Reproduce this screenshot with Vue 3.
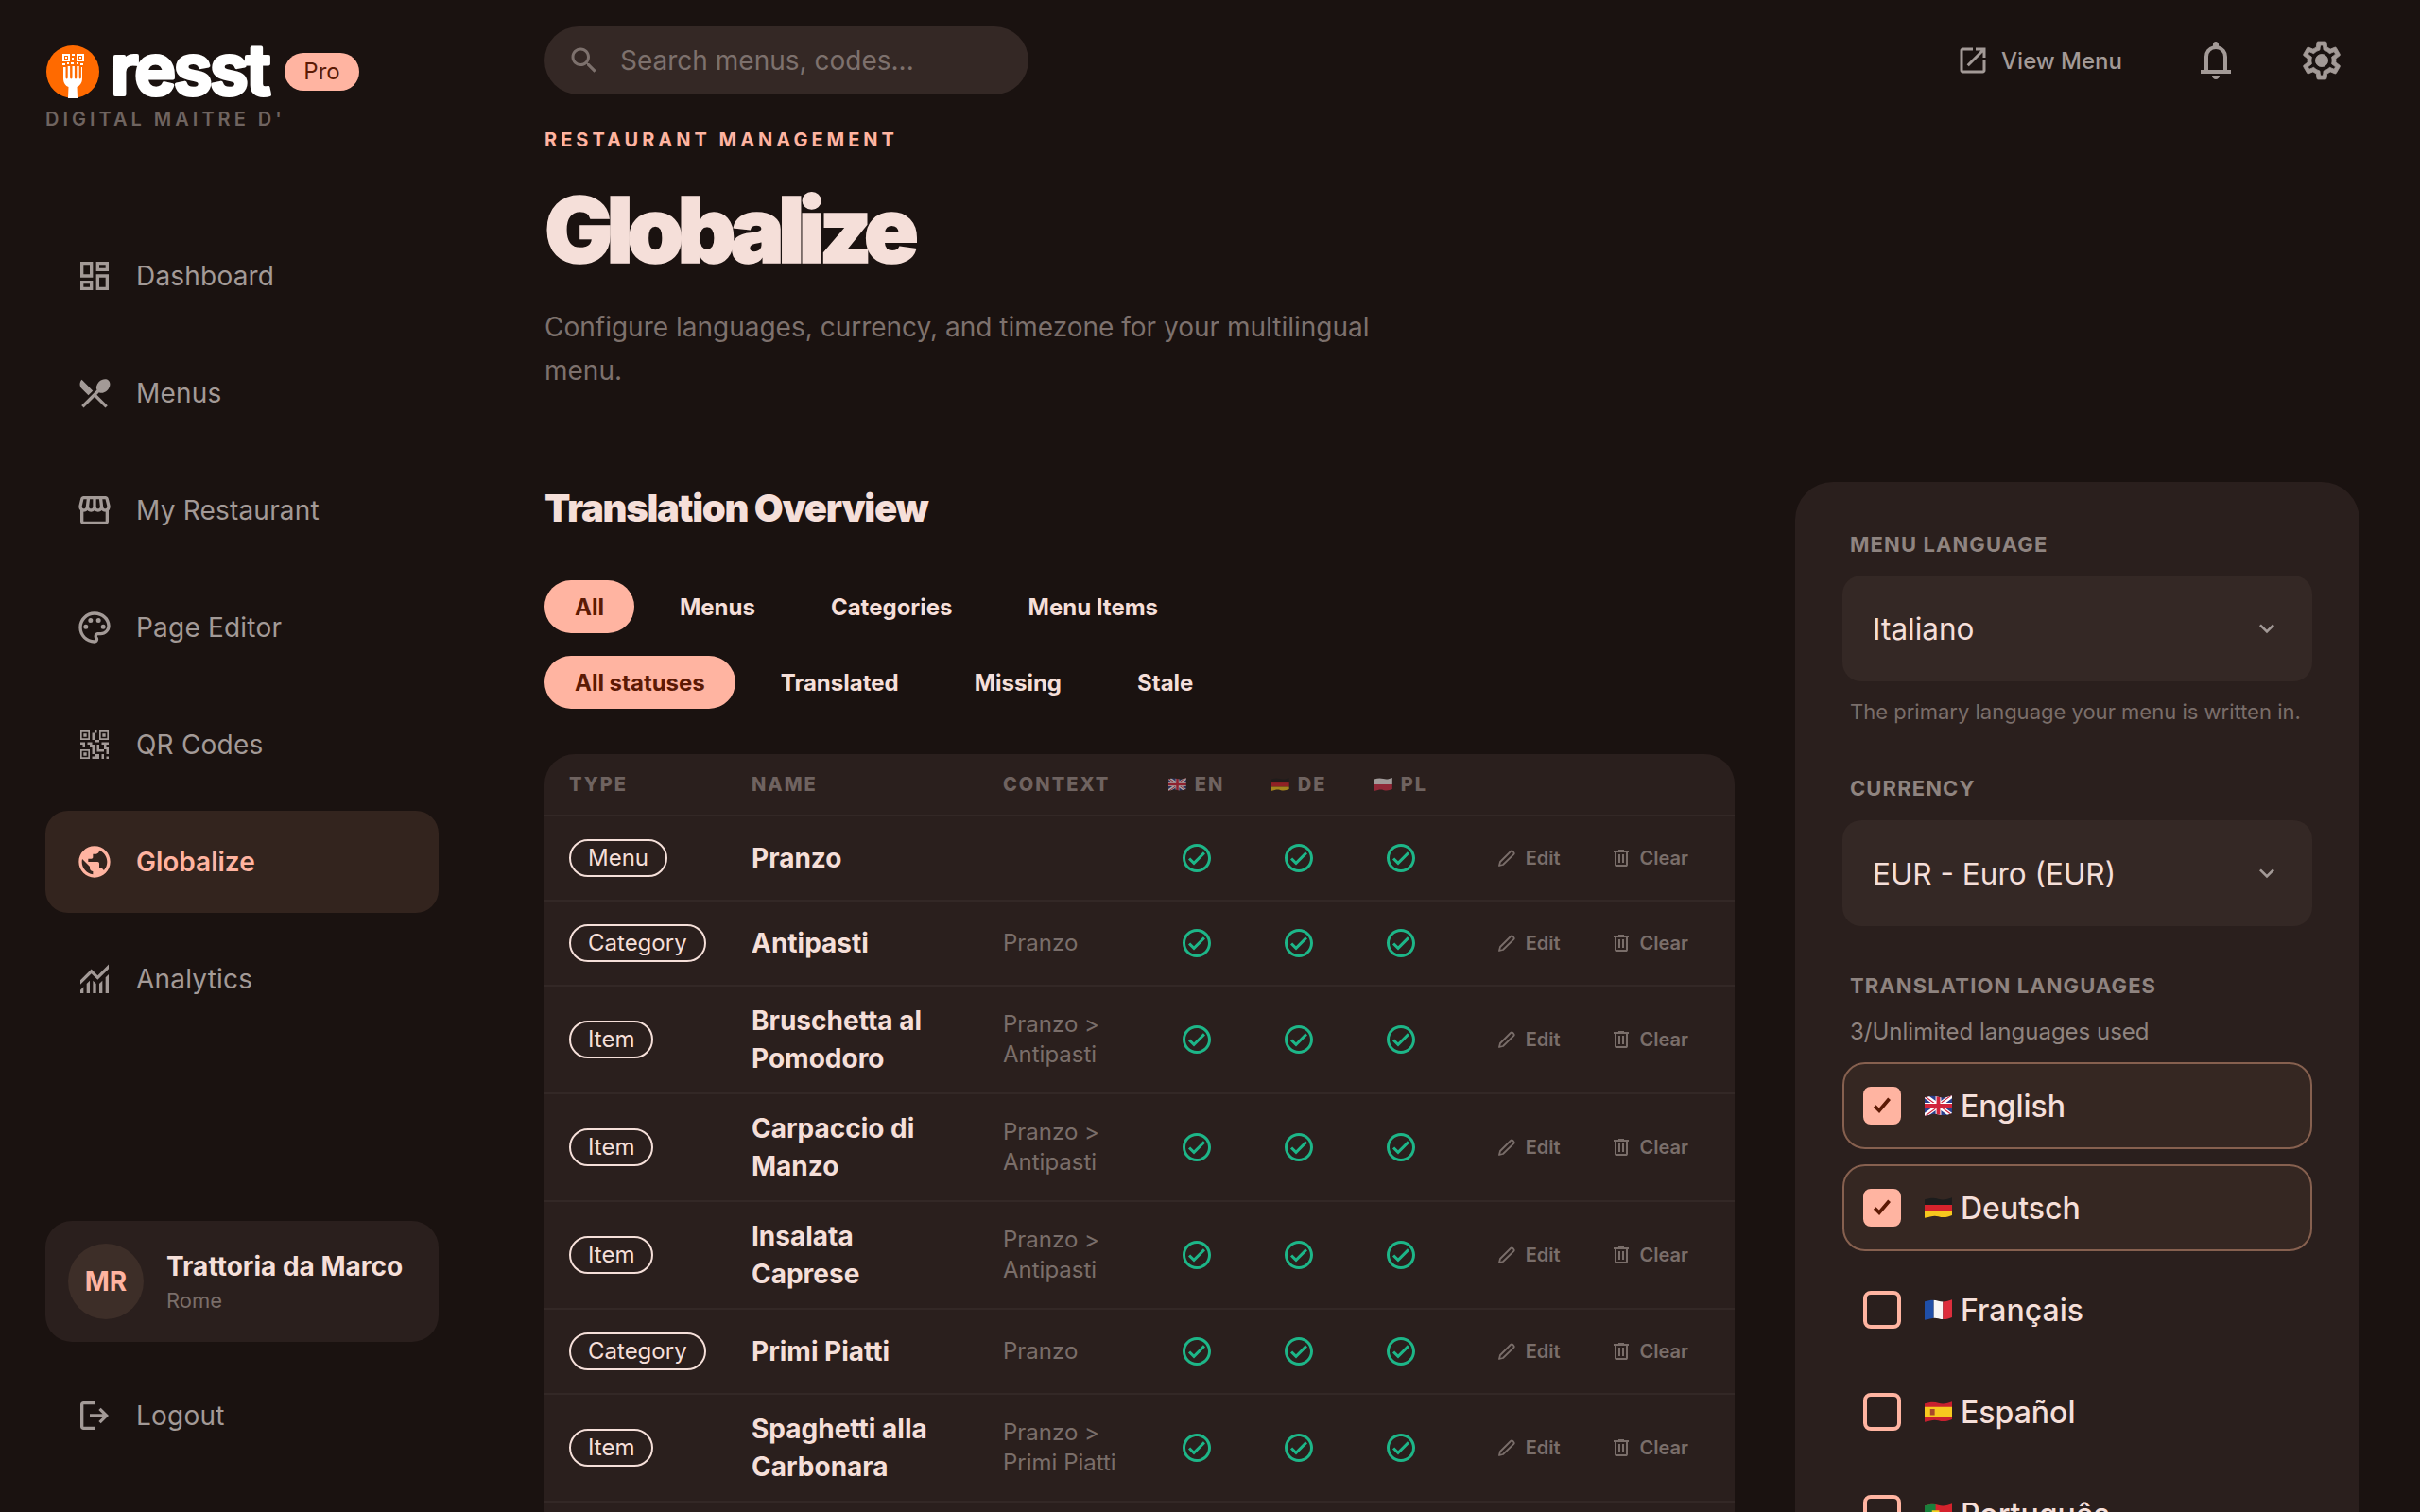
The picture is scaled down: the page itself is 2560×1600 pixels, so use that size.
<script setup>
const navItems = [
  { label: "Dashboard", icon: "M19 5v2h-4V5h4M9 5v6H5V5h4m10 8v6h-4v-6h4M9 17v2H5v-2h4M21 3h-8v6h8V3zM11 3H3v10h8V3zm10 8h-8v10h8V11zm-10 4H3v6h8v-6z" },
  { label: "Menus", icon: "M8.1 13.34l2.83-2.83L3.91 3.5c-1.56 1.56-1.56 4.09 0 5.66l4.19 4.18zm6.78-1.81c1.53.71 3.68.21 5.27-1.38 1.91-1.91 2.28-4.65.81-6.12-1.46-1.46-4.2-1.1-6.12.81-1.59 1.59-2.09 3.74-1.38 5.27L3.7 19.87l1.41 1.41L12 14.41l6.88 6.88 1.41-1.41L13.41 13l1.47-1.47z" },
  { label: "My Restaurant", icon: "M21.9 8.89l-1.05-4.37c-.22-.9-1-1.52-1.91-1.52H5.05c-.9 0-1.69.63-1.9 1.52L2.1 8.89c-.24 1.02-.02 2.06.62 2.88.08.11.19.19.28.29V19c0 1.1.9 2 2 2h14c1.1 0 2-.9 2-2v-6.94c.09-.09.2-.18.28-.28.64-.82.87-1.87.62-2.89zm-2.99-3.9l1.05 4.37c.1.42.01.84-.25 1.17-.14.18-.44.47-.94.47-.61 0-1.14-.49-1.21-1.14L16.98 5l1.93-.01zM13 5h1.96l.54 4.52c.05.39-.07.78-.33 1.07-.22.26-.54.41-.95.41-.67 0-1.22-.59-1.22-1.31V5zM8.49 9.52L9.04 5H11v4.69c0 .72-.55 1.31-1.29 1.31-.34 0-.65-.15-.89-.41-.25-.29-.37-.68-.33-1.07zm-4.45-.16L5.05 5h1.97l-.58 4.86c-.08.65-.6 1.14-1.21 1.14-.49 0-.8-.29-.93-.47-.27-.32-.36-.75-.26-1.17zM5 19v-6.03c.08.01.15.03.23.03.87 0 1.66-.36 2.24-.95.6.6 1.4.95 2.31.95.87 0 1.65-.36 2.23-.93.59.57 1.39.93 2.29.93.84 0 1.64-.35 2.24-.95.58.59 1.37.95 2.24.95.08 0 .15-.02.23-.03V19H5z" },
  { label: "Page Editor", icon: "M12 22C6.49 22 2 17.51 2 12S6.49 2 12 2s10 4.04 10 9c0 3.31-2.69 6-6 6h-1.77c-.28 0-.5.22-.5.5 0 .12.05.23.13.33.41.47.64 1.06.64 1.67 0 1.38-1.12 2.5-2.5 2.5zm0-18c-4.41 0-8 3.59-8 8s3.59 8 8 8c.28 0 .5-.22.5-.5 0-.16-.08-.28-.14-.35-.41-.46-.63-1.05-.63-1.65 0-1.38 1.12-2.5 2.5-2.5H16c2.21 0 4-1.79 4-4 0-3.86-3.59-7-8-7zM6.5 10a1.5 1.5 0 1 0 0 3 1.5 1.5 0 0 0 0-3zm3-4a1.5 1.5 0 1 0 0 3 1.5 1.5 0 0 0 0-3zm5 0a1.5 1.5 0 1 0 0 3 1.5 1.5 0 0 0 0-3zm3 4a1.5 1.5 0 1 0 0 3 1.5 1.5 0 0 0 0-3z" },
  { label: "QR Codes", icon: "M3 3h6v6H3zm1 1v4h4V4zm1 1v2h2V5zM15 3h6v6h-6zm1 1v4h4V4zm1 1v2h2V5zM3 15h6v6H3zm1 1v4h4v-4zm1 1v2h2v-2zM12 3h1.5v1.5H12zM10.5 4.5H12V9h-1.5zM3 10.5h3V12H3zM7.5 10.5h3V12h-3zM12 9h3v1.5h-3zM16.5 10.5H21V12h-4.5zM4.5 12H6v1.5H4.5zM9 12h3v1.5H9zM13.5 12H15v3h-1.5zM18 12h1.5v3H18zM10.5 13.5H12V18h-1.5zM15 15h3v1.5h-3zM19.5 13.5H21V18h-1.5zM12 18h3v3h-3zM16.5 18H18v3h-1.5zM19.5 19.5H21V21h-1.5zM10.5 19.5H12V21h-1.5zM13.5 15H15v1.5h-1.5z" },
  { label: "Globalize", active: true, icon: "M12 2C6.48 2 2 6.48 2 12s4.48 10 10 10 10-4.48 10-10S17.52 2 12 2zm-1 17.93c-3.95-.49-7-3.85-7-7.93 0-.62.08-1.21.21-1.79L9 15v1c0 1.1.9 2 2 2v1.93zm6.9-2.54c-.26-.81-1-1.39-1.9-1.39h-1v-3c0-.55-.45-1-1-1H8v-2h2c.55 0 1-.45 1-1V7h2c1.1 0 2-.9 2-2v-.41c2.93 1.19 5 4.06 5 7.41 0 2.08-.8 3.97-2.1 5.39z" },
  { label: "Analytics", icon: "M3 21v-2l2-2v4H3zm4 0v-6l2-2v8H7zm4 0v-8l2 2v6h-2zm4 0v-6l2-2v8h-2zm4 0V11l2-2v12h-2zM3 15.5v-2.8l7-7 4 4 7-7v2.8l-7 7-4-4-7 7z" },
];

const iconCheck = "M12 2C6.48 2 2 6.48 2 12s4.48 10 10 10 10-4.48 10-10S17.52 2 12 2zm0 18c-4.41 0-8-3.59-8-8s3.59-8 8-8 8 3.59 8 8-3.59 8-8 8zm4.59-12.42L10 14.17l-2.59-2.58L6 13l4 4 8-8z";
const iconEdit = "M4 20l1-4L16 5q1.2-1.2 2.4 0l.8.8q1.2 1.2 0 2.4L8 19z";
const iconTrash = "M7 21q-.825 0-1.413-.588T5 19V6H4V4h5V3h6v1h5v2h-1v13q0 .825-.588 1.413T17 21H7zM17 6H7v13h10V6zM9 17h2V8H9v9zm4 0h2V8h-2v9z";
const iconChevron = "M16.59 8.59L12 13.17 7.41 8.59 6 10l6 6 6-6z";

const typeFilters = ["All", "Menus", "Categories", "Menu Items"];
const statusFilters = ["All statuses", "Translated", "Missing", "Stale"];

const rows = [
  { type: "Menu", name: "Pranzo", context: "" },
  { type: "Category", name: "Antipasti", context: "Pranzo" },
  { type: "Item", name: "Bruschetta al Pomodoro", context: "Pranzo > Antipasti" },
  { type: "Item", name: "Carpaccio di Manzo", context: "Pranzo > Antipasti" },
  { type: "Item", name: "Insalata Caprese", context: "Pranzo > Antipasti" },
  { type: "Category", name: "Primi Piatti", context: "Pranzo" },
  { type: "Item", name: "Spaghetti alla Carbonara", context: "Pranzo > Primi Piatti" },
];

// flags are drawn on a 30x22 box, the wave comes from the clip path in the template
const flags = {
  gb: [
    { d: "M0 0h30v22H0z", fill: "#2b3f8c" },
    { d: "M0 0h4l26 19v3h-4L0 3zM30 0v3L4 22H0v-3L26 0z", fill: "#fff" },
    { d: "M0 0l13 9.5h-2L0 1.5zM30 22L17 12.5h2l11 8zM30 0L17 9.5h-2L28 0zM0 22l13-9.5h2L2 22z", fill: "#d0243c" },
    { d: "M12 0h6v8h12v6H18v8h-6v-8H0V8h12z", fill: "#fff" },
    { d: "M13 0h4v9h13v4H17v9h-4v-9H0V9h13z", fill: "#d0243c" },
  ],
  de: [
    { d: "M0 0h30v8H0z", fill: "#1c1c1c" },
    { d: "M0 8h30v7H0z", fill: "#d5232c" },
    { d: "M0 15h30v7H0z", fill: "#f6c81e" },
  ],
  pl: [
    { d: "M0 0h30v11H0z", fill: "#f2eeee" },
    { d: "M0 11h30v11H0z", fill: "#d6304a" },
  ],
  fr: [
    { d: "M0 0h10v22H0z", fill: "#1f4fa8" },
    { d: "M10 0h10v22H10z", fill: "#f6f6f6" },
    { d: "M20 0h10v22H20z", fill: "#dd2e3c" },
  ],
  es: [
    { d: "M0 0h30v22H0z", fill: "#c8202f" },
    { d: "M0 5.5h30v11H0z", fill: "#f7c91f" },
    { d: "M6 8h5v6.5H6z", fill: "#a8482a" },
  ],
  pt: [
    { d: "M0 0h30v22H0z", fill: "#d5232c" },
    { d: "M0 0h12v22H0z", fill: "#18803c" },
    { d: "M8 7h8v8H8z", fill: "#f5d020" },
  ],
};

const columns = [
  { code: "EN", flag: "gb" },
  { code: "DE", flag: "de" },
  { code: "PL", flag: "pl" },
];

const languages = [
  { name: "English", flag: "gb", on: true },
  { name: "Deutsch", flag: "de", on: true },
  { name: "Français", flag: "fr", on: false },
  { name: "Español", flag: "es", on: false },
  { name: "Português", flag: "pt", on: false },
];
</script>

<template>
  <svg class="defs" width="0" height="0" aria-hidden="true">
    <defs>
      <clipPath id="flag-wave" clipPathUnits="objectBoundingBox">
        <path d="M0,.1 C.2,.02 .35,.0 .5,.08 C.7,.16 .85,.08 1,0 L1,.86 C.85,.94 .7,1 .5,.92 C.35,.86 .2,.92 0,1 Z" />
      </clipPath>
    </defs>
  </svg>

  <div class="app">
    <aside class="sidebar">
      <div class="brand">
        <div class="brand-row">
          <svg class="logo-mark" viewBox="0 0 56 56">
            <circle cx="28" cy="28" r="28" fill="#ff6a00" />
            <g fill="#fff">
              <path d="M17 9h8v8h-8zm2 2v4h4v-4zM32 9h8v8h-8zm2 2v4h4v-4zM20 12h2v2h-2zM35 12h2v2h-2zM27 9h3v2h-3zM27 13h2v3h-2zM17 19h3v2h-3zM22 18h2v2h-2zM26 18h3v2h-3zM32 18h2v2h-2zM36 19h3v2h-3z" />
              <path d="M18 23h2.5v11c0 .8.6 1.4 1.2 1.4s1-.6 1-1.4V22h2.4v12c0 .8.5 1.4 1.2 1.4s1.2-.6 1.2-1.4V22h2.4v12c0 .8.5 1.4 1.2 1.4s1.2-.6 1.2-1.4V22h2.4v12c0 .8.4 1.4 1 1.4s1.2-.6 1.2-1.4V23H38v12c0 5-3 8-5.5 9l.5 12h-10l.5-12C20.6 43 18 40 18 35z" />
            </g>
          </svg>
          <svg class="wordmark" viewBox="0 0 174 70">
            <text x="2" y="58">resst</text>
          </svg>
          <span class="pro">Pro</span>
        </div>
        <div class="tagline">DIGITAL MAITRE D'</div>
      </div>

      <nav class="nav">
        <a v-for="item in navItems" :key="item.label" class="nav-item" :class="{ active: item.active }">
          <svg class="nav-icon" viewBox="0 0 24 24"><path :d="item.icon" fill-rule="evenodd" /></svg>
          <span>{{ item.label }}</span>
        </a>
      </nav>

      <div class="side-foot">
        <div class="user-card">
          <div class="avatar">MR</div>
          <div>
            <div class="user-name">Trattoria da Marco</div>
            <div class="user-city">Rome</div>
          </div>
        </div>
        <a class="nav-item">
          <svg class="nav-icon" viewBox="0 0 24 24"><path d="M5 21q-.825 0-1.413-.588T3 19V5q0-.825.588-1.413T5 3h7v2H5v14h7v2H5zm11-4-1.375-1.45 2.55-2.55H9v-2h8.175l-2.55-2.55L16 7l5 5-5 5z" /></svg>
          <span>Logout</span>
        </a>
      </div>
    </aside>

    <main class="main">
      <header class="topbar">
        <div class="search">
          <svg class="search-icon" viewBox="0 0 24 24"><path d="M15.5 14h-.79l-.28-.27C15.41 12.59 16 11.11 16 9.5 16 5.91 13.09 3 9.5 3S3 5.91 3 9.5 5.91 16 9.5 16c1.61 0 3.09-.59 4.23-1.57l.27.28v.79l5 4.99L20.49 19l-4.99-5zm-6 0C7.01 14 5 11.99 5 9.5S7.01 5 9.5 5 14 7.01 14 9.5 11.99 14 9.5 14z" /></svg>
          <span>Search menus, codes...</span>
        </div>
        <div class="top-actions">
          <a class="view-menu">
            <svg viewBox="0 0 24 24"><path d="M19 19H5V5h7V3H5c-1.11 0-2 .9-2 2v14c0 1.1.89 2 2 2h14c1.1 0 2-.9 2-2v-7h-2v7zM14 3v2h3.59l-9.83 9.83 1.41 1.41L19 6.41V10h2V3h-7z" /></svg>
            <span>View Menu</span>
          </a>
          <svg class="top-icon" viewBox="0 0 24 24"><path d="M4 19v-2h2v-7q0-2.075 1.25-3.688T10.5 4.2v-.7q0-.625.438-1.063T12 2q.625 0 1.063.438T13.5 3.5v.7q1.875.475 3.188 2.088T18 10v7h2v2H4zm8 3q-.825 0-1.413-.588T10 20h4q0 .825-.588 1.413T12 22zm-4-5h8v-7q0-1.65-1.175-2.825T12 6q-1.65 0-2.825 1.175T8 10v7z" /></svg>
          <svg class="top-icon gear" viewBox="0 0 24 24">
            <path d="M19.43 12.98c.04-.32.07-.64.07-.98 0-.34-.03-.66-.07-.98l2.11-1.65c.19-.15.24-.42.12-.64l-2-3.46c-.09-.16-.26-.25-.44-.25-.06 0-.12.01-.17.03l-2.49 1c-.52-.4-1.08-.73-1.69-.98l-.38-2.65C14.46 2.18 14.25 2 14 2h-4c-.25 0-.46.18-.49.42l-.38 2.65c-.61.25-1.17.59-1.69.98l-2.49-1c-.06-.02-.12-.03-.18-.03-.17 0-.34.09-.43.25l-2 3.46c-.13.22-.07.49.12.64l2.11 1.65c-.04.32-.07.65-.07.98 0 .33.03.66.07.98l-2.11 1.65c-.19.15-.24.42-.12.64l2 3.46c.09.16.26.25.44.25.06 0 .12-.01.17-.03l2.49-1c.52.4 1.08.73 1.69.98l.38 2.65c.03.24.24.42.49.42h4c.25 0 .46-.18.49-.42l.38-2.65c.61-.25 1.17-.59 1.69-.98l2.49 1c.06.02.12.03.18.03.17 0 .34-.09.43-.25l2-3.46c.12-.22.07-.49-.12-.64l-2.11-1.65zm-1.98-1.71c.04.31.05.52.05.73 0 .21-.02.43-.05.73l-.14 1.13.89.7 1.08.84-.7 1.21-1.27-.51-1.04-.42-.9.68c-.43.32-.84.56-1.25.73l-1.06.43-.16 1.13-.2 1.35h-1.4l-.19-1.35-.16-1.13-1.06-.43c-.43-.18-.83-.41-1.23-.71l-.91-.7-1.06.43-1.27.51-.7-1.21 1.08-.84.89-.7-.14-1.13c-.03-.31-.05-.54-.05-.74s.02-.43.05-.73l.14-1.13-.89-.7-1.08-.84.7-1.21 1.27.51 1.04.42.9-.68c.43-.32.84-.56 1.25-.73l1.06-.43.16-1.13.2-1.35h1.39l.19 1.35.16 1.13 1.06.43c.43.18.83.41 1.23.71l.91.7 1.06-.43 1.27-.51.7 1.21-1.07.85-.89.7.14 1.13z" />
            <circle cx="12" cy="12" r="3.3" />
          </svg>
        </div>
      </header>

      <section class="page-head">
        <div class="eyebrow">RESTAURANT MANAGEMENT</div>
        <h1>Globalize</h1>
        <p>Configure languages, currency, and timezone for your multilingual menu.</p>
      </section>

      <div class="columns">
        <section>
          <h2>Translation Overview</h2>
          <div class="chips">
            <button v-for="(f, i) in typeFilters" :key="f" class="chip" :class="{ on: i === 0 }">{{ f }}</button>
          </div>
          <div class="chips second">
            <button v-for="(f, i) in statusFilters" :key="f" class="chip" :class="{ on: i === 0 }">{{ f }}</button>
          </div>

          <div class="table-card">
            <table>
              <colgroup>
                <col style="width: 193px" />
                <col style="width: 266px" />
                <col style="width: 176px" />
                <col style="width: 109px" />
                <col style="width: 108px" />
                <col style="width: 108px" />
                <col />
              </colgroup>
              <thead>
                <tr>
                  <th>TYPE</th>
                  <th>NAME</th>
                  <th>CONTEXT</th>
                  <th v-for="c in columns" :key="c.code" class="lang">
                    <span class="lang-head">
                      <svg class="flag small" viewBox="0 0 30 22"><path v-for="(s, i) in flags[c.flag]" :key="i" :d="s.d" :fill="s.fill" /></svg>
                      {{ c.code }}
                    </span>
                  </th>
                  <th></th>
                </tr>
              </thead>
              <tbody>
                <tr v-for="row in rows" :key="row.name">
                  <td><span class="badge">{{ row.type }}</span></td>
                  <td class="name">{{ row.name }}</td>
                  <td class="context">{{ row.context }}</td>
                  <td v-for="c in columns" :key="c.code" class="lang">
                    <svg class="check" viewBox="0 0 24 24"><path :d="iconCheck" /></svg>
                  </td>
                  <td>
                    <div class="actions">
                      <a class="act">
                        <svg class="pencil" viewBox="0 0 24 24"><path :d="iconEdit" /></svg>
                        Edit
                      </a>
                      <a class="act">
                        <svg viewBox="0 0 24 24"><path :d="iconTrash" /></svg>
                        Clear
                      </a>
                    </div>
                  </td>
                </tr>
              </tbody>
            </table>
          </div>
        </section>

        <aside class="panel">
          <div class="label first">MENU LANGUAGE</div>
          <div class="select">
            <span>Italiano</span>
            <svg viewBox="0 0 24 24"><path :d="iconChevron" /></svg>
          </div>
          <div class="help">The primary language your menu is written in.</div>

          <div class="label spaced">CURRENCY</div>
          <div class="select">
            <span>EUR - Euro (EUR)</span>
            <svg viewBox="0 0 24 24"><path :d="iconChevron" /></svg>
          </div>

          <div class="label langs">TRANSLATION LANGUAGES</div>
          <div class="used">3/Unlimited languages used</div>
          <div class="lang-list">
            <label v-for="l in languages" :key="l.name" class="lang-row" :class="{ on: l.on }">
              <span class="box">
                <svg v-if="l.on" viewBox="0 0 24 24"><path d="M9.3 19.4 3.6 13.7l2.4-2.4 3.1 3.1 8.6-10.2 2.6 2.2z" /></svg>
              </span>
              <svg class="flag" viewBox="0 0 30 22"><path v-for="(s, i) in flags[l.flag]" :key="i" :d="s.d" :fill="s.fill" /></svg>
              <span>{{ l.name }}</span>
            </label>
          </div>
        </aside>
      </div>
    </main>
  </div>
</template>

<style>
html,
body {
  margin: 0;
  background: #1a1210;
}
</style>

<style scoped>
.defs {
  position: absolute;
}
.app {
  display: flex;
  height: 1600px;
  overflow: hidden;
  background: #1a1210;
  color: #f5dfd9;
  font-family: Inter, "Noto Sans", sans-serif;
}

/* sidebar */
.sidebar {
  width: 512px;
  flex: none;
  box-sizing: border-box;
  padding: 48px 48px 48px;
  display: flex;
  flex-direction: column;
}
.brand {
  height: 86px;
  margin-bottom: 104px;
}
.brand-row {
  display: flex;
  align-items: flex-start;
}
.logo-mark {
  width: 56px;
  height: 56px;
  margin-left: 1px;
}
.wordmark {
  width: 174px;
  height: 70px;
  margin: -6px 0 -14px 10px;
  overflow: visible;
}
.wordmark text {
  font-family: Inter, sans-serif;
  font-size: 74px;
  font-weight: 600;
  letter-spacing: -2.4px;
  fill: #fff;
  stroke: #fff;
  stroke-width: 4px;
  stroke-linejoin: round;
}
.pro {
  margin: 8px 0 0 12px;
  width: 79px;
  height: 40px;
  line-height: 40px;
  text-align: center;
  border-radius: 20px;
  background: #ffb4a1;
  color: #5c1a05;
  font-size: 24px;
}
.tagline {
  margin-top: 10px;
  font-size: 20px;
  font-weight: 600;
  line-height: 24px;
  letter-spacing: 4px;
  color: #6f6460;
}
.nav {
  display: flex;
  flex-direction: column;
  gap: 16px;
}
.nav-item {
  display: flex;
  align-items: center;
  gap: 24px;
  height: 108px;
  padding-left: 32px;
  border-radius: 24px;
  font-size: 28px;
  font-weight: 400;
  letter-spacing: 0.2px;
  color: #a39a97;
}
.nav-item.active {
  background: #33241e;
  color: #ffb4a1;
  font-weight: 600;
  letter-spacing: 0;
}
.nav-icon {
  width: 40px;
  height: 40px;
  fill: currentColor;
}
.side-foot {
  margin-top: auto;
  display: flex;
  flex-direction: column;
  gap: 24px;
}
.user-card {
  display: flex;
  align-items: center;
  gap: 24px;
  height: 128px;
  box-sizing: border-box;
  padding-left: 24px;
  border-radius: 28px;
  background: #2a1f1d;
}
.avatar {
  width: 80px;
  height: 80px;
  border-radius: 50%;
  background: #3d2e28;
  color: #ffb4a1;
  font-size: 28px;
  font-weight: 700;
  line-height: 80px;
  text-align: center;
}
.user-name {
  font-size: 28px;
  font-weight: 700;
  line-height: 40px;
}
.user-city {
  font-size: 22px;
  line-height: 32px;
  color: #7a6e6a;
}

/* main */
.main {
  flex: 1;
  min-width: 0;
  padding: 0 64px;
}
.topbar {
  display: flex;
  align-items: center;
  justify-content: space-between;
  height: 128px;
}
.search {
  display: flex;
  align-items: center;
  gap: 20px;
  width: 512px;
  height: 72px;
  box-sizing: border-box;
  padding-left: 24px;
  border-radius: 36px;
  background: #342825;
  font-size: 28px;
  color: #7d716d;
}
.search-icon {
  width: 36px;
  height: 36px;
  fill: #7d716d;
}
.top-actions {
  display: flex;
  align-items: center;
}
.view-menu {
  display: flex;
  align-items: center;
  gap: 12px;
  font-size: 24px;
  font-weight: 500;
  color: #a39a97;
}
.view-menu svg {
  width: 36px;
  height: 36px;
  fill: #a39a97;
}
.top-icon {
  width: 48px;
  height: 48px;
  fill: #a39a97;
  margin-left: 75px;
}
.top-icon.gear {
  margin-left: 64px;
  margin-right: 16px;
  stroke: #a39a97;
  stroke-width: 0.4;
}
.page-head {
  box-sizing: border-box;
  height: 382px;
  padding-top: 5px;
}
.eyebrow {
  font-size: 20px;
  font-weight: 700;
  line-height: 30px;
  letter-spacing: 4px;
  color: #ffb4a1;
}
h1 {
  margin: 20px 0 0;
  font-size: 96px;
  font-weight: 900;
  line-height: 120px;
  letter-spacing: -6.8px;
  -webkit-text-stroke: 1.5px #f5dfd9;
  color: #f5dfd9;
}
.page-head p {
  margin: 20px 0 0;
  max-width: 896px;
  font-size: 28px;
  line-height: 46px;
  color: #7d716d;
}
.columns {
  display: grid;
  grid-template-columns: 1259px 597px;
  gap: 64px;
}
h2 {
  margin: 0 0 48px;
  font-size: 40px;
  font-weight: 900;
  line-height: 56px;
  letter-spacing: -1.3px;
  color: #f5dfd9;
}
.chips {
  display: flex;
  gap: 16px;
}
.chips.second {
  margin-top: 24px;
}
.chip {
  height: 56px;
  padding: 0 32px;
  border: 0;
  border-radius: 28px;
  background: transparent;
  color: #f5dfd9;
  font-family: inherit;
  font-size: 24px;
  font-weight: 700;
}
.chip.on {
  background: #ffb4a1;
  color: #5c1a05;
}

/* table */
.table-card {
  margin-top: 48px;
  padding-bottom: 40px;
  border-radius: 32px;
  background: #2a1f1d;
  overflow: hidden;
}
table {
  width: 100%;
  table-layout: fixed;
  border-collapse: separate;
  border-spacing: 0;
}
th,
td {
  padding: 0 0 0 26px;
  border-bottom: 2px solid #332826;
  text-align: left;
}
thead tr {
  height: 66px;
}
tbody tr {
  height: 90px;
}
th {
  font-size: 20px;
  font-weight: 800;
  letter-spacing: 2px;
  color: #6f6360;
}
th.lang,
td.lang {
  padding: 0;
  text-align: center;
}
.lang-head {
  display: inline-flex;
  align-items: center;
  gap: 9px;
}
.badge {
  display: inline-block;
  box-sizing: border-box;
  height: 40px;
  padding: 0 18px;
  border: 2px solid #f5dfd9;
  border-radius: 20px;
  font-size: 24px;
  line-height: 36px;
}
td.name {
  padding: 16px 26px;
  font-size: 28px;
  font-weight: 700;
  line-height: 40px;
}
td.context {
  padding-right: 26px;
  font-size: 24px;
  line-height: 32px;
  color: #7a6e6a;
}
.check {
  display: block;
  margin: 0 auto;
  width: 36px;
  height: 36px;
  fill: #1db688;
}
.actions {
  display: flex;
  justify-content: flex-end;
  gap: 52px;
  padding-right: 49px;
}
.act {
  display: flex;
  align-items: center;
  gap: 8px;
  font-size: 20px;
  font-weight: 600;
  color: #7a6e6a;
}
.act svg {
  width: 24px;
  height: 24px;
  fill: #7a6e6a;
}
.act svg.pencil {
  fill: none;
  stroke: #7a6e6a;
  stroke-width: 1.8;
  stroke-linejoin: round;
}

/* right panel */
.panel {
  box-sizing: border-box;
  padding: 48px 50px 0;
  height: 1200px;
  border-radius: 40px;
  background: #2a1f1d;
}
.label {
  padding-left: 8px;
  font-size: 22px;
  font-weight: 700;
  line-height: 34px;
  letter-spacing: 1.1px;
  color: #8f8480;
  margin-bottom: 17px;
}
.label.first {
  padding-top: 1px;
  margin-bottom: 16px;
}
.label.spaced {
  margin-top: 47px;
}
.label.langs {
  margin-top: 46px;
}
.select {
  display: flex;
  align-items: center;
  justify-content: space-between;
  height: 112px;
  padding: 0 32px;
  border-radius: 20px;
  background: #342825;
  font-size: 31.5px;
  color: #f5dfd9;
}
.select svg {
  width: 32px;
  height: 32px;
  fill: #a39a97;
}
.help {
  margin-top: 15px;
  padding-left: 8px;
  font-size: 22px;
  line-height: 34px;
  color: #7a6e6a;
}
.used {
  margin: -3px 0 14px;
  padding-left: 8px;
  font-size: 24px;
  line-height: 36px;
  color: #8f8480;
}
.lang-list {
  display: flex;
  flex-direction: column;
  gap: 16px;
}
.lang-row {
  display: flex;
  align-items: center;
  height: 92px;
  box-sizing: border-box;
  padding-left: 20px;
  border: 2px solid transparent;
  border-radius: 24px;
  font-size: 32px;
  font-weight: 500;
}
.lang-row.on {
  background: #352722;
  border-color: #86604f;
}
.box {
  display: flex;
  align-items: center;
  justify-content: center;
  box-sizing: border-box;
  width: 40px;
  height: 40px;
  margin-right: 25px;
  border: 4px solid #ffb4a1;
  border-radius: 8px;
}
.lang-row.on .box {
  background: #ffb4a1;
}
.box svg {
  width: 26px;
  height: 26px;
  flex: none;
  fill: #5c1a05;
}
.flag {
  width: 29px;
  height: 22px;
  margin-right: 9px;
  clip-path: url(#flag-wave);
}
.flag.small {
  width: 19px;
  height: 14px;
  margin-right: 0;
  opacity: 0.6;
}
</style>
